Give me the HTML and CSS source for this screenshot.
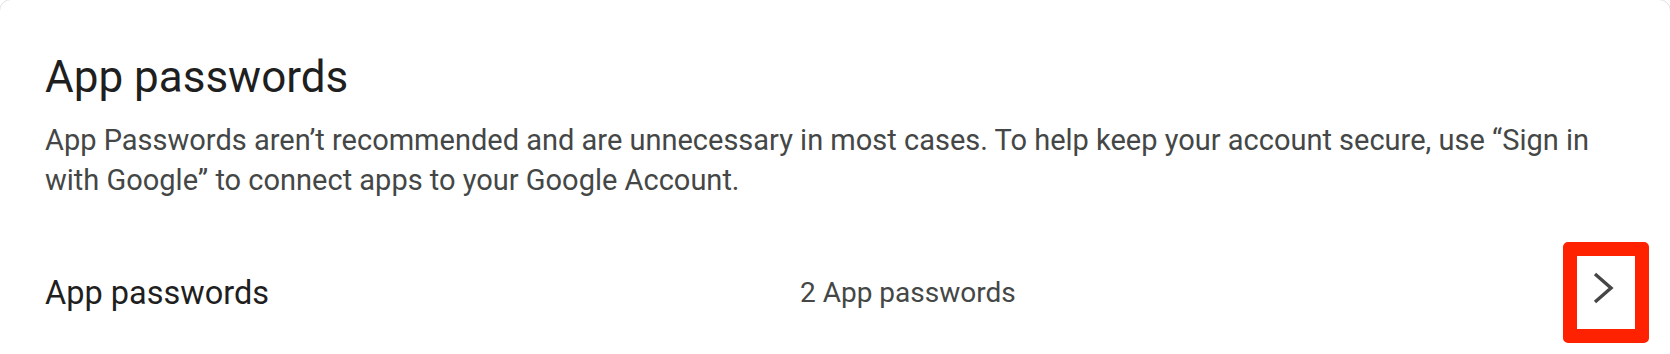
FILE: index.html
```html
<!DOCTYPE html>
<html lang="en">
<head>
<meta charset="utf-8">
<title>App passwords</title>
<link rel="stylesheet" href="styles.css">
</head>
<body>
  <section class="card">
    <h1 class="card-title">App passwords</h1>
    <p class="card-desc">App Passwords aren’t recommended and are unnecessary in most cases. To help keep your account secure, use “Sign in with Google” to connect apps to your Google Account.</p>
    <div class="row">
      <div class="row-label">App passwords</div>
      <div class="row-value">2 App passwords</div>
      <button class="row-action" aria-label="Open app passwords">
        <svg class="chevron" width="58" height="73" viewBox="0 0 58 73" aria-hidden="true">
          <polyline points="18,18 34,32 18,46" fill="none" stroke="#444746" stroke-width="3.4" stroke-linejoin="miter" stroke-linecap="butt"/>
        </svg>
      </button>
    </div>
  </section>
</body>
</html>
```
FILE: styles.css
```css
html, body {
  margin: 0;
  padding: 0;
  background: #ffffff;
  overflow: hidden;
}

body {
  font-family: Roboto, "Liberation Sans", Arial, sans-serif;
  color: #1f1f1f;
}

.card {
  box-sizing: border-box;
  margin: -1px -1px 0 -1px;
  min-height: 420px;
  border: 1px solid #e0e0e0;
  border-radius: 12px;
  padding: 49px 21px 0 45px;
}

.card-title {
  margin: 0;
  font-size: 44px;
  font-weight: 400;
  line-height: 56px;
  color: #1f1f1f;
}

.card-desc {
  margin: 15px 0 0 0;
  padding-right: 29px;
  font-size: 29px;
  line-height: 40px;
  color: #444746;
}

.row {
  display: flex;
  align-items: center;
  margin-top: 42px;
}

.row-label {
  flex: 0 0 755px;
  font-size: 32.5px;
  color: #1f1f1f;
}

.row-value {
  flex: 1 1 auto;
  font-size: 28px;
  color: #444746;
}

.row-action {
  flex: 0 0 auto;
  display: flex;
  margin: 0;
  padding: 0;
  border: 14px solid #ff2200;
  border-radius: 5px;
  background: #ffffff;
  cursor: pointer;
}

.chevron {
  display: block;
}
```
